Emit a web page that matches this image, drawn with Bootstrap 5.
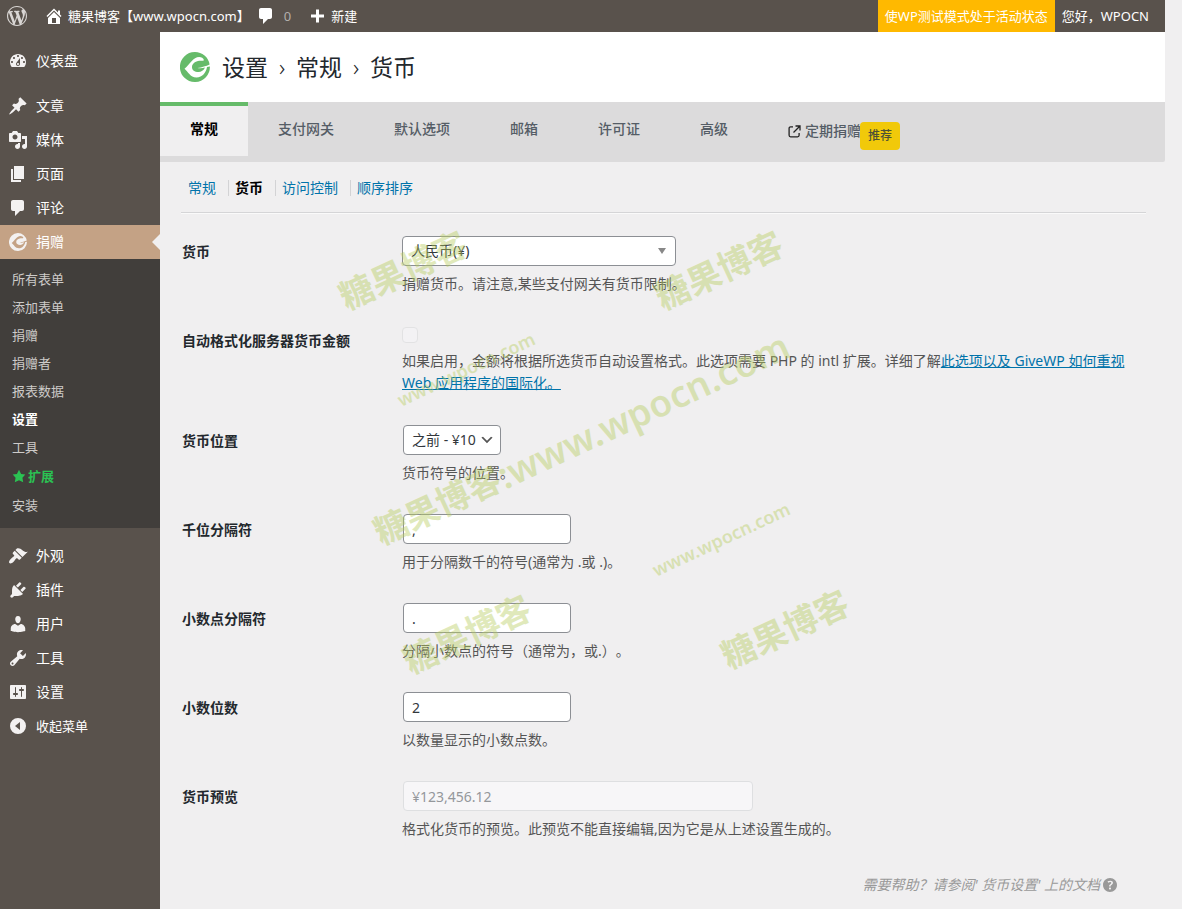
<!DOCTYPE html>
<html lang="zh-CN">
<head>
<meta charset="utf-8">
<meta name="viewport" content="width=device-width, initial-scale=1">
<title>设置 › 常规 › 货币</title>
<link href="https://cdn.jsdelivr.net/npm/bootstrap@5.3.0/dist/css/bootstrap.min.css" rel="stylesheet">
<style>
  :root { --bar: #59524c; --sub: #413e3b; --accent: #c4a285; --page: #f0eff0; --give: #66bb6a; --link: #0073aa; }
  body { font: 14px/22px "Noto Sans", "Noto Sans CJK SC", sans-serif; text-spacing-trim: space-all; background: var(--page); color: #3c434a; }
  a { text-decoration: none; }
  .frame { padding-right: 17px; min-height: 100vh; }
  svg.dash { width: 20px; height: 20px; fill: currentColor; flex: none; }

  .adminbar { height: 32px; background: var(--bar); font-size: 13px; line-height: 32px; }
  .adminbar a { color: #fff; }
  .adminbar .wp { color: #d9d6d4; padding: 0 1px 0 7px; }
  .adminbar .zero { color: #b3afac; }
  .adminbar .comments { margin-left: 6px; }
  .adminbar .testmode { background: #ffb900; padding: 0 7px; }
  .adminbar .hello { padding: 0 16px 0 7px; }

  .side { width: 160px; background: var(--bar); padding-top: 12px; }
  .side .item { height: 34px; color: #fff; padding-left: 8px; gap: 8px; }
  .side .item svg { color: #f3f1f1; }
  .side .collapser { font-size: 13px; }
  .side .gap-line { height: 11px; }
  .side .current { background: var(--accent); position: relative; }
  .side .current::after { content: ""; position: absolute; right: 0; top: 9px; border: 8px solid transparent; border-right-color: var(--page); border-left: 0; }
  .submenu { background: var(--sub); padding: 6px 0 9px; margin-bottom: 11px; font-size: 13px; line-height: 28px; }
  .submenu a { color: #cdcbc9; padding-left: 12px; }
  .submenu a.on { color: #fff; font-weight: 700; }
  .submenu a.addons { color: #2bc253; font-weight: 700; line-height: 30px; gap: 2px; }
  .submenu svg { width: 14px; height: 14px; }

  .title-row { height: 70px; background: #fff; padding-left: 20px; gap: 12px; }
  .title-row h1 { font-size: 23px; line-height: 32px; color: #23282d; font-weight: 400; }
  .title-row .sep { width: 28px; font-weight: 300; }
  .tabs { background: #dcdbdc; padding-bottom: 6px; height: 60px; border-radius: 0 0 2px 0; }
  .tabs a { height: 54px; padding: 0 30px; border-top: 4px solid transparent; color: #555d66; font-weight: 500; line-height: 46px; }
  .tabs a.on { background: var(--page); border-top-color: var(--give); color: #000; font-weight: 700; }
  .tabs a.recurring { line-height: 50px; position: relative; }
  .tabs .tag { position: absolute; left: 102px; top: 16px; width: 40px; height: 28px; line-height: 28px; border-radius: 4px; background: #f1c90a; color: #4d5136; font-size: 12px; text-align: center; }

  .inner { padding: 15px 19px 0 21px; }
  .subtabs { padding-bottom: 13px; border-bottom: 1px solid #d5d5d7; box-shadow: 0 1px #fafafa; }
  .subtabs a { color: var(--link); padding: 0 12px 0 7px; }
  .subtabs a + a { position: relative; }
  .subtabs a + a::before { content: ""; position: absolute; left: 0; top: 3px; height: 16px; border-left: 1px solid #d3d3d5; }
  .subtabs a.on { color: #000; font-weight: 700; }

  .fields { padding: 23px 20px 0 1px; }
  .field { padding-bottom: 30px; }
  .field > .name { width: 220px; flex: none; color: #23282d; font-weight: 700; padding-top: 5px; }
  .field p { margin: 7px 0 0; color: #555; }
  .field p a { color: var(--link); text-decoration: underline; }
  .field .form-control, .field .form-select { height: 30px; min-height: 30px; border: 1px solid #8c8f94; border-radius: 4px; padding: 0 8px; font-size: 14px; line-height: 28px; color: #32373c; background-color: #fff; margin-left: 1px; }
  .field .form-select.place { width: 98px; background: #fff url("data:image/svg+xml,%3Csvg xmlns='http://www.w3.org/2000/svg' viewBox='0 0 20 20'%3E%3Cpath d='M5 6l5 5 5-5 2 1-7 7-7-7 2-1z' fill='%23555'/%3E%3C/svg%3E") no-repeat right 5px center/16px 16px; }
  .field .form-select.currency { width: 274px; margin-left: 0; background: #fff url("data:image/svg+xml,%3Csvg xmlns='http://www.w3.org/2000/svg' viewBox='0 0 8 6'%3E%3Cpath d='M0 0h8L4 6z' fill='%23888'/%3E%3C/svg%3E") no-repeat right 9px top 11px/8px 6px; }
  .field .short { width: 168px; }
  .field .long { width: 350px; }
  .field .form-control:disabled { background: #f7f6f8; border-color: #dedfe1; color: #94979b; }
  .field .form-check-input { width: 16px; height: 16px; margin: 2px 0 0; border: 1px solid #d5d6d8; border-radius: 4px; background: #f7f6f8; display: block; }
  .field.wide { padding-bottom: 31px; }
  .help { color: #999; font-style: italic; padding: 4px 26px 12px 0; }
  .help:hover { color: #777; }
  .help svg { width: 20px; height: 20px; }

  .stamp { position: absolute; inset: 0; width: 100%; height: 100%; pointer-events: none; fill: #b7cd5e; opacity: .42; }
  .stamp .big { font-size: 34px; font-weight: 700; }
  .stamp .url { font-size: 37px; font-weight: 600; }
  .stamp .tiny { font-size: 18px; font-weight: 600; }
</style>
</head>
<body>
<svg class="d-none" xmlns="http://www.w3.org/2000/svg">
  <symbol id="give" viewBox="0 0 30 30"><path fill-rule="evenodd" d="M15 0a15 15 0 0 1 14.600 12.400C26 14 22 15.200 17.500 16c2.600.4 5.200.2 7.500-.4-1.200 3-3.800 4.400-6.500 4.400-4 0-6.500-2-6.500-4.800 0-3.600 3.400-6 7.400-6.400 2-.2 3.600.2 4.600-.6-.6-2-2.600-3.200-4.800-3.200C13 5 10 12.200 4.500 16.800 8 19.500 10 25.500 16.500 25.500c6 0 9.800-5.300 10.500-10.500l2.900-.6A15 15 0 1 1 15 0z"/></symbol>
</svg>
<div class="frame d-flex flex-column position-relative">
  <header class="adminbar d-flex">
    <a href="#" class="wp d-flex align-items-center" aria-label="WordPress"><svg class="dash" viewBox="0 0 20 20"><path d="M20 10c0-5.510-4.490-10-10-10C4.480 0 0 4.490 0 10c0 5.520 4.480 10 10 10 5.510 0 10-4.480 10-10zM7.780 15.370L4.370 6.220c.55-.02 1.170-.08 1.170-.08.5-.06.44-1.130-.06-1.110 0 0-1.450.11-2.370.11-.18 0-.37 0-.58-.01C4.120 2.690 6.870 1.110 10 1.110c2.330 0 4.450.87 6.050 2.340-.68-.11-1.650.39-1.650 1.580 0 .74.45 1.360.9 2.100.35.61.55 1.360.55 2.460 0 1.490-1.400 5-1.400 5l-3.030-8.370c.54-.02.82-.17.82-.17.5-.05.44-1.250-.06-1.220 0 0-1.440.12-2.380.12-.87 0-2.330-.12-2.330-.12-.5-.03-.56 1.200-.06 1.220l.92.08 1.260 3.410zM17.410 10c.24-.64.74-1.870.43-4.250.7 1.290 1.050 2.710 1.050 4.250 0 3.290-1.730 6.240-4.400 7.780.97-2.590 1.940-5.200 2.920-7.780zM6.100 18.090C3.120 16.650 1.110 13.530 1.110 10c0-1.300.23-2.480.72-3.590C3.250 10.300 4.670 14.200 6.100 18.090zm4.030-6.630l2.580 6.980c-.86.29-1.760.45-2.710.45-.79 0-1.570-.11-2.290-.33.81-2.380 1.620-4.740 2.420-7.100z"/></svg></a>
    <a href="#" class="d-flex align-items-center ms-3"><svg class="dash me-1" viewBox="0 0 20 20"><path d="M16 8.500l1.530 1.530-1.060 1.060L10 4.600l-6.470 6.490-1.060-1.060L10 2.500l4 4v-2h2v4zm-6-2.460l6 5.990V18H4v-5.970zM12 17v-5H8v5h4z"/></svg>糖果博客【www.wpocn.com】</a>
    <a href="#" class="comments d-flex align-items-center"><svg class="dash me-2" viewBox="0 0 20 20"><path d="M5 2h9c1.100 0 2 .9 2 2v7c0 1.100-.9 2-2 2h-2l-5 5v-5H5c-1.100 0-2-.9-2-2V4c0-1.100.9-2 2-2z"/></svg><span class="zero">0</span></a>
    <a href="#" class="d-flex align-items-center ms-3"><svg class="dash me-1" viewBox="0 0 20 20"><path d="M17 8.500v3h-5v5H9v-5H4v-3h5v-5h3v5h5z"/></svg>新建</a>
    <a href="#" class="testmode ms-auto">使WP测试模式处于活动状态</a>
    <a href="#" class="hello">您好，WPOCN</a>
  </header>

  <div class="d-flex flex-grow-1">
    <nav class="side flex-shrink-0" aria-label="主菜单">
      <a href="#" class="item d-flex align-items-center"><svg class="dash" viewBox="0 0 20 20"><path fill-rule="evenodd" d="M3.760 16h12.480c1.100-1.370 1.760-3.110 1.760-5 0-4.420-3.580-8-8-8s-8 3.580-8 8c0 1.890.66 3.630 1.760 5zM10 4c.55 0 1 .45 1 1s-.45 1-1 1-1-.45-1-1 .45-1 1-1zM6 6c.55 0 1 .45 1 1s-.45 1-1 1-1-.45-1-1 .45-1 1-1zm8 0c.55 0 1 .45 1 1s-.45 1-1 1-1-.45-1-1 .45-1 1-1zm-5.370 5.550L12 7v6c0 1.100-.9 2-2 2s-2-.9-2-2c0-.57.24-1.080.63-1.450zM4 10c.55 0 1 .45 1 1s-.45 1-1 1-1-.45-1-1 .45-1 1-1zm12 0c.55 0 1 .45 1 1s-.45 1-1 1-1-.45-1-1 .45-1 1-1zm-5 3c0-.55-.45-1-1-1s-1 .45-1 1 .45 1 1 1 1-.45 1-1z"/></svg>仪表盘</a>
      <div class="gap-line"></div>
      <a href="#" class="item d-flex align-items-center"><svg class="dash" viewBox="0 0 20 20"><path d="M10.440 3.020l1.820-1.820 6.360 6.350-1.830 1.820c-1.050-.68-2.480-.57-3.410.36l-.75.75c-.92.93-1.040 2.350-.35 3.410l-1.830 1.820-2.410-2.410-2.800 2.790c-.42.42-3.380 2.710-3.800 2.290s1.860-3.390 2.280-3.810l2.790-2.790L4.100 9.360l1.830-1.820c1.050.69 2.480.57 3.400-.36l.75-.75c.93-.92 1.050-2.350.36-3.410z"/></svg>文章</a>
      <a href="#" class="item d-flex align-items-center"><svg class="dash" viewBox="0 0 20 20"><path fill-rule="evenodd" d="M13 11V4c0-.55-.45-1-1-1h-1.670L9 1H5L3.670 3H2c-.55 0-1 .45-1 1v7c0 .55.45 1 1 1h10c.55 0 1-.45 1-1zM7 4.500c1.380 0 2.500 1.120 2.500 2.500S8.380 9.500 7 9.500 4.500 8.380 4.500 7 5.620 4.500 7 4.500zM14 6h5v10.500c0 1.380-1.120 2.500-2.500 2.500S14 17.880 14 16.500s1.120-2.500 2.500-2.500c.17 0 .34.02.5.05V9h-3V6zm-4 8.050V13h2v3.500c0 1.380-1.120 2.500-2.500 2.500S7 17.880 7 16.500 8.120 14 9.500 14c.17 0 .34.02.5.05z"/></svg>媒体</a>
      <a href="#" class="item d-flex align-items-center"><svg class="dash" viewBox="0 0 20 20"><path d="M6 15V2h10v13H6zm-1 1h8v2H3V5h2v11z"/></svg>页面</a>
      <a href="#" class="item d-flex align-items-center"><svg class="dash" viewBox="0 0 20 20"><path d="M5 2h9c1.100 0 2 .9 2 2v7c0 1.100-.9 2-2 2h-2l-5 5v-5H5c-1.100 0-2-.9-2-2V4c0-1.100.9-2 2-2z"/></svg>评论</a>
      <a href="#" class="item current d-flex align-items-center"><svg class="dash" viewBox="0 0 20 20"><use href="#give" x="1" y="1" width="18" height="18"/></svg>捐赠</a>
      <div class="submenu d-flex flex-column">
        <a href="#">所有表单</a><a href="#">添加表单</a><a href="#">捐赠</a><a href="#">捐赠者</a><a href="#">报表数据</a>
        <a href="#" class="on">设置</a><a href="#">工具</a>
        <a href="#" class="addons d-flex align-items-center"><svg class="dash" viewBox="0 0 20 20"><path d="M10 1l3 6 6 .75-4.120 4.620L16 19l-6-3-6 3 1.130-6.630L1 7.750 7 7z"/></svg>扩展</a>
        <a href="#">安装</a>
      </div>
      <a href="#" class="item d-flex align-items-center"><svg class="dash" viewBox="0 0 20 20"><path d="M14.480 11.060L7.410 3.990l1.500-1.500c.5-.56 2.300-.47 3.510.32 1.210.8 1.430 1.280 2.910 2.100 1.180.64 2.450 1.260 4.450.85zm-.71.71L6.700 4.700 4.930 6.470c-.39.39-.39 1.020 0 1.410l1.060 1.060c.39.39.39 1.030 0 1.420-.6.6-1.430 1.110-2.210 1.690-.35.26-.7.53-1.010.84C1.430 14.230.4 16.080 1.400 17.070c.99 1 2.840-.03 4.180-1.360.31-.31.58-.66.85-1.020.57-.78 1.080-1.610 1.690-2.210.39-.39 1.020-.39 1.410 0l1.060 1.060c.39.39 1.020.39 1.410 0z"/></svg>外观</a>
      <a href="#" class="item d-flex align-items-center"><svg class="dash" viewBox="0 0 20 20"><path d="M13.110 4.360L9.870 7.600 8 5.730l3.240-3.240c.35-.34 1.050-.2 1.560.32.52.51.66 1.210.31 1.550zm-8 1.770l.91-1.120 9.010 9.010-1.190.84c-.71.71-2.630 1.160-3.820 1.160H6.140L4.900 17.260c-.59.59-1.540.59-2.120 0-.59-.58-.59-1.530 0-2.120l1.240-1.240v-3.880c0-1.130.4-3.190 1.090-3.890zm7.260 3.970l3.240-3.240c.34-.35 1.040-.21 1.550.31.52.51.66 1.210.31 1.550l-3.240 3.250z"/></svg>插件</a>
      <a href="#" class="item d-flex align-items-center"><svg class="dash" viewBox="0 0 20 20"><path d="M10 9.250c-2.270 0-2.730-3.440-2.730-3.440C7 4.020 7.820 2 9.970 2c2.160 0 2.980 2.020 2.710 3.810 0 0-.41 3.440-2.680 3.440zm0 2.570L12.720 10c2.390 0 4.520 2.330 4.520 4.530v2.490s-3.650 1.130-7.240 1.130c-3.650 0-7.240-1.130-7.240-1.130v-2.490c0-2.250 1.940-4.480 4.470-4.480z"/></svg>用户</a>
      <a href="#" class="item d-flex align-items-center"><svg class="dash" viewBox="0 0 20 20"><path fill-rule="evenodd" d="M16.680 9.770c-1.340 1.340-3.300 1.670-4.950.99l-5.410 6.520c-.99.99-2.590.99-3.580 0s-.99-2.590 0-3.570l6.520-5.420c-.68-1.650-.35-3.610.99-4.950 1.280-1.280 3.120-1.620 4.720-1.060l-2.890 2.890 2.820 2.820 2.860-2.870c.53 1.580.18 3.390-1.080 4.650zM3.810 16.210c.4.39 1.040.39 1.430 0 .4-.4.4-1.040 0-1.430-.39-.4-1.030-.4-1.430 0-.39.39-.39 1.030 0 1.430z"/></svg>工具</a>
      <a href="#" class="item d-flex align-items-center"><svg class="dash" viewBox="0 0 20 20"><path fill-rule="evenodd" d="M18 16V4c0-.55-.45-1-1-1H3c-.55 0-1 .45-1 1v12c0 .55.45 1 1 1h14c.55 0 1-.45 1-1zM8 11h1c.55 0 1 .45 1 1s-.45 1-1 1H8v1.500c0 .28-.22.5-.5.5s-.5-.22-.5-.5V13H6c-.55 0-1-.45-1-1s.45-1 1-1h1V5.500c0-.28.22-.5.5-.5s.5.22.5.5V11zm5-2h-1c-.55 0-1-.45-1-1s.45-1 1-1h1V5.500c0-.28.22-.5.5-.5s.5.22.5.5V7h1c.55 0 1 .45 1 1s-.45 1-1 1h-1v5.500c0 .28-.22.5-.5.5s-.5-.22-.5-.5V9z"/></svg>设置</a>
      <a href="#" class="item collapser d-flex align-items-center"><svg class="dash" viewBox="0 0 20 20"><path fill-rule="evenodd" d="M10 2a8 8 0 1 1 0 16 8 8 0 0 1 0-16zm2 12V6l-5 4z"/></svg>收起菜单</a>
    </nav>

    <main class="flex-grow-1">
      <div class="title-row d-flex align-items-center">
        <svg width="30" height="30" fill="#66bb6a" aria-hidden="true"><use href="#give"/></svg>
        <h1 class="m-0 d-flex">设置<span class="sep text-center">›</span>常规<span class="sep text-center">›</span>货币</h1>
      </div>
      <nav class="tabs d-flex" aria-label="设置标签">
        <a href="#" class="on">常规</a><a href="#">支付网关</a><a href="#">默认选项</a><a href="#">邮箱</a><a href="#">许可证</a><a href="#">高级</a>
        <a href="#" class="recurring d-flex align-items-center"><svg class="me-1" width="13" height="13" viewBox="0 0 13 13" fill="none" stroke="#222" stroke-width="1.300" aria-hidden="true"><path d="M5 1.800H2.600a1.500 1.500 0 0 0-1.500 1.500v7a1.500 1.500 0 0 0 1.500 1.500h7a1.500 1.500 0 0 0 1.500-1.500V8M7.500 1h4.500v4.500M12 1L5.500 7.500"/></svg>定期捐赠<span class="tag">推荐</span></a>
      </nav>

      <div class="inner">
        <nav class="subtabs d-flex" aria-label="常规设置">
          <a href="#">常规</a><a href="#" class="on">货币</a><a href="#">访问控制</a><a href="#">顺序排序</a>
        </nav>
        <form class="fields">
          <div class="field d-flex">
            <label class="name" for="currency">货币</label>
            <div><select id="currency" class="form-select currency"><option>人民币(¥)</option></select>
              <p>捐赠货币。请注意,某些支付网关有货币限制。</p></div>
          </div>
          <div class="field wide d-flex">
            <label class="name" for="autofmt">自动格式化服务器货币金额</label>
            <div><input id="autofmt" type="checkbox" class="form-check-input" disabled>
              <p>如果启用，金额将根据所选货币自动设置格式。此选项需要 PHP 的 intl 扩展。详细了解<a href="#">此选项以及 GiveWP 如何重视 Web 应用程序的国际化。</a></p></div>
          </div>
          <div class="field d-flex">
            <label class="name" for="place">货币位置</label>
            <div><select id="place" class="form-select place"><option>之前 - ¥10</option></select>
              <p>货币符号的位置。</p></div>
          </div>
          <div class="field d-flex">
            <label class="name" for="thousand">千位分隔符</label>
            <div><input id="thousand" type="text" class="form-control short" value=",">
              <p>用于分隔数千的符号(通常为 .或 .)。</p></div>
          </div>
          <div class="field d-flex">
            <label class="name" for="decimal">小数点分隔符</label>
            <div><input id="decimal" type="text" class="form-control short" value=".">
              <p>分隔小数点的符号（通常为，或.）。</p></div>
          </div>
          <div class="field d-flex">
            <label class="name" for="digits">小数位数</label>
            <div><input id="digits" type="text" class="form-control short" value="2">
              <p>以数量显示的小数点数。</p></div>
          </div>
          <div class="field d-flex">
            <label class="name" for="preview">货币预览</label>
            <div><input id="preview" type="text" class="form-control long" value="¥123,456.12" disabled>
              <p>格式化货币的预览。此预览不能直接编辑,因为它是从上述设置生成的。</p></div>
          </div>
        </form>
        <a href="#" class="help d-flex align-items-center justify-content-end">需要帮助？请参阅' 货币设置' 上的文档<svg class="dash" viewBox="0 0 20 20"><path fill-rule="evenodd" d="M17 10c0-3.870-3.140-7-7-7-3.870 0-7 3.130-7 7s3.130 7 7 7c3.860 0 7-3.130 7-7zm-6.300 1.480H9.140v-.43c0-.38.08-.7.24-.98s.46-.57.88-.89c.41-.29.68-.53.81-.71.14-.18.2-.39.2-.62 0-.25-.09-.44-.28-.58-.19-.13-.45-.19-.79-.19-.58 0-1.250.19-2 .57l-.64-1.280c.87-.49 1.800-.74 2.770-.74.81 0 1.450.2 1.920.58.48.39.71.91.71 1.550 0 .43-.09.8-.29 1.110-.19.32-.57.67-1.110 1.060-.38.28-.61.49-.71.63-.1.15-.15.34-.15.57v.35zm-1.470 2.740c-.18-.17-.27-.42-.27-.73 0-.33.08-.58.26-.75s.43-.25.77-.25c.32 0 .57.09.75.26s.27.42.27.74c0 .3-.09.55-.27.72-.18.18-.43.27-.75.27-.33 0-.58-.09-.76-.26z"/></svg></a>
      </div>
    </main>
  </div>

  <svg class="stamp" aria-hidden="true" text-anchor="middle" dominant-baseline="central">
    <text class="big" transform="translate(403 270) rotate(-25)">糖果博客</text>
    <text class="big" transform="translate(719 270) rotate(-25)">糖果博客</text>
    <text class="big" transform="translate(467 634) rotate(-25)">糖果博客</text>
    <text class="big" transform="translate(785 629) rotate(-25)">糖果博客</text>
    <text class="big" transform="translate(581 438) rotate(-25)">糖果博客<tspan class="url">:www.wpocn.com</tspan></text>
    <text class="tiny" transform="translate(466 369) rotate(-25)">www.wpocn.com</text>
    <text class="tiny" transform="translate(721 539) rotate(-25)">www.wpocn.com</text>
  </svg>
</div>
<script src="https://cdn.jsdelivr.net/npm/bootstrap@5.3.0/dist/js/bootstrap.bundle.min.js"></script>
</body>
</html>
